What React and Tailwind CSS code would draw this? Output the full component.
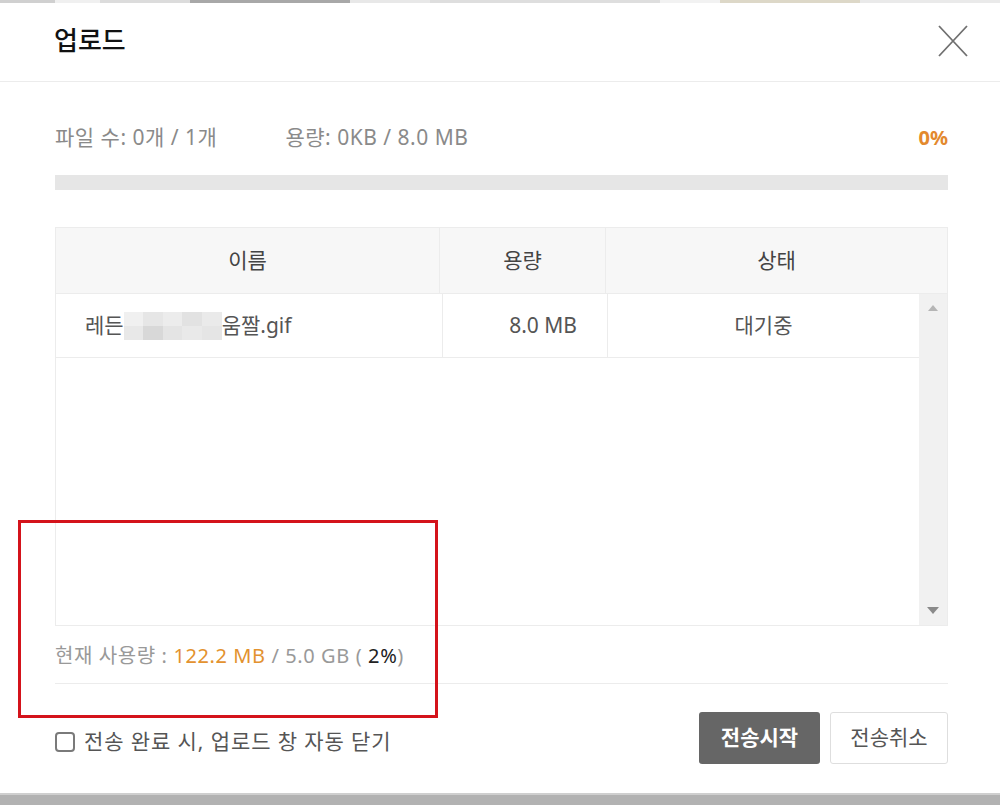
import React from "react";

const font = { fontFamily: '"Noto Sans", "Noto Sans CJK KR", sans-serif' };

// pixelated blur over part of the file name
const blurCells = [
  ["#f0f0f0", "#e6e6e6", "#ececec", "#e2e2e2", "#eaeaea"],
  ["#e8e8e8", "#d8d8d8", "#e4e4e4", "#e9e9e9", "#e5e5e5"],
];

const App = () => {
  return (
    <div
      className="relative w-[1000px] h-[805px] bg-white flex flex-col overflow-hidden"
      style={font}
    >
      {/* background peeking above the dialog */}
      <div className="flex h-[3px] shrink-0">
        <div className="w-[55px] bg-[#d0d0d0]" />
        <div className="w-[45px] bg-[#f0f0f0]" />
        <div className="w-[90px] bg-[#dcdcdc]" />
        <div className="w-[160px] bg-[#a8a8a8]" />
        <div className="w-[80px] bg-[#e8e8e8]" />
        <div className="w-[230px] bg-[#dedede]" />
        <div className="w-[60px] bg-[#f2f2f2]" />
        <div className="w-[140px] bg-[#ddd8c8]" />
        <div className="flex-1 bg-[#eaeaea]" />
      </div>

      {/* header */}
      <div className="h-[79px] shrink-0 flex items-center justify-between pl-[54px] pr-[31px] border-b border-[#ececec]">
        <h1 className="text-[26px] text-[#111] font-medium -mt-[3px]">업로드</h1>
        <svg width="32" height="34" viewBox="0 0 32 34" className="-mt-[2px]">
          <path d="M2 2 L30 32 M30 2 L2 32" stroke="#707070" strokeWidth="1.8" fill="none" />
        </svg>
      </div>

      <div className="pl-[55px] pr-[52px] flex flex-col">
        {/* info row */}
        <div className="mt-[41px] h-[30px] flex items-center text-[21px] text-[#8a8a8a] tracking-[0.5px]">
          <span>파일 수: 0개 / 1개</span>
          <span className="ml-[68px]">용량: 0KB / 8.0 MB</span>
          <span className="ml-auto font-bold text-[#e3892d] text-[20px] tracking-normal">0%</span>
        </div>

        {/* progress */}
        <div className="mt-[22px] h-[15px] bg-[#e6e6e6]" />

        {/* table */}
        <div className="mt-[37px] border border-[#ececec] h-[399px] flex flex-col">
          <div className="grid grid-cols-[384px_166px_1fr] h-[66px] bg-[#f7f7f7] border-b border-[#ececec] text-[21px] text-[#444]">
            <div className="flex items-center justify-center border-r border-[#ececec]">이름</div>
            <div className="flex items-center justify-center border-r border-[#ececec]">용량</div>
            <div className="flex items-center justify-center">상태</div>
          </div>
          <div className="flex flex-1">
            <div className="flex-1">
              <div className="grid grid-cols-[387px_165px_1fr] h-[64px] border-b border-[#ececec] text-[21px] text-[#555]">
                <div className="flex items-center pl-[29px] border-r border-[#ececec]">
                  <span>레든</span>
                  <span className="w-[98px] h-[28px] flex flex-col">
                    {blurCells.map((row, i) => (
                      <span key={i} className="flex flex-1">
                        {row.map((c, j) => (
                          <span key={j} className="flex-1" style={{ background: c }} />
                        ))}
                      </span>
                    ))}
                  </span>
                  <span>움짤.gif</span>
                </div>
                <div className="flex items-center justify-end pr-[30px] border-r border-[#ececec]">8.0 MB</div>
                <div className="flex items-center justify-center">대기중</div>
              </div>
            </div>
            {/* scrollbar */}
            <div className="w-[28px] bg-[#f1f1f1] flex flex-col items-center justify-between py-[11px]">
              <svg width="10" height="6" viewBox="0 0 10 6">
                <path d="M0 6 L5 0 L10 6 Z" fill="#b5b5b5" />
              </svg>
              <svg width="12" height="7" viewBox="0 0 12 7">
                <path d="M0 0 L12 0 L6 7 Z" fill="#8a8a8a" />
              </svg>
            </div>
          </div>
        </div>

        {/* usage */}
        <div className="mt-[18px] h-[24px] flex items-center text-[20px] text-[#999] tracking-[0.6px]">
          <span>현재 사용량 :&nbsp;</span>
          <span className="text-[#e3922f]">122.2 MB</span>
          <span>&nbsp;/ 5.0 GB (&nbsp;</span>
          <span className="text-[#222]">2%</span>
          <span>)</span>
        </div>
        <div className="mt-[15px] border-b border-[#ececec]" />

        {/* footer */}
        <div className="mt-[28px] flex items-center">
          <label className="flex items-center gap-[9px] text-[21px] text-[#555] mt-[7px] tracking-[0.9px]">
            <span className="w-[20px] h-[20px] border-2 border-[#7a7a7a] rounded-[4px] bg-white" />
            <span>전송 완료 시, 업로드 창 자동 닫기</span>
          </label>
          <button className="ml-auto w-[121px] h-[52px] rounded-[3px] bg-[#666] text-white text-[21px] font-bold">
            전송시작
          </button>
          <button className="ml-[10px] w-[118px] h-[52px] rounded-[3px] bg-white border border-[#dedede] text-[#555] text-[21px]">
            전송취소
          </button>
        </div>
      </div>

      <div className="flex-1" />
      {/* page behind, bottom */}
      <div className="h-[12px] bg-[#b2b2b2] border-t-2 border-[#cfcfcf] shrink-0" />

      {/* red annotation box */}
      <div className="absolute left-[18px] top-[520px] w-[420px] h-[198px] border-[3px] border-[#d4131b]" />
    </div>
  );
};

export default App;
